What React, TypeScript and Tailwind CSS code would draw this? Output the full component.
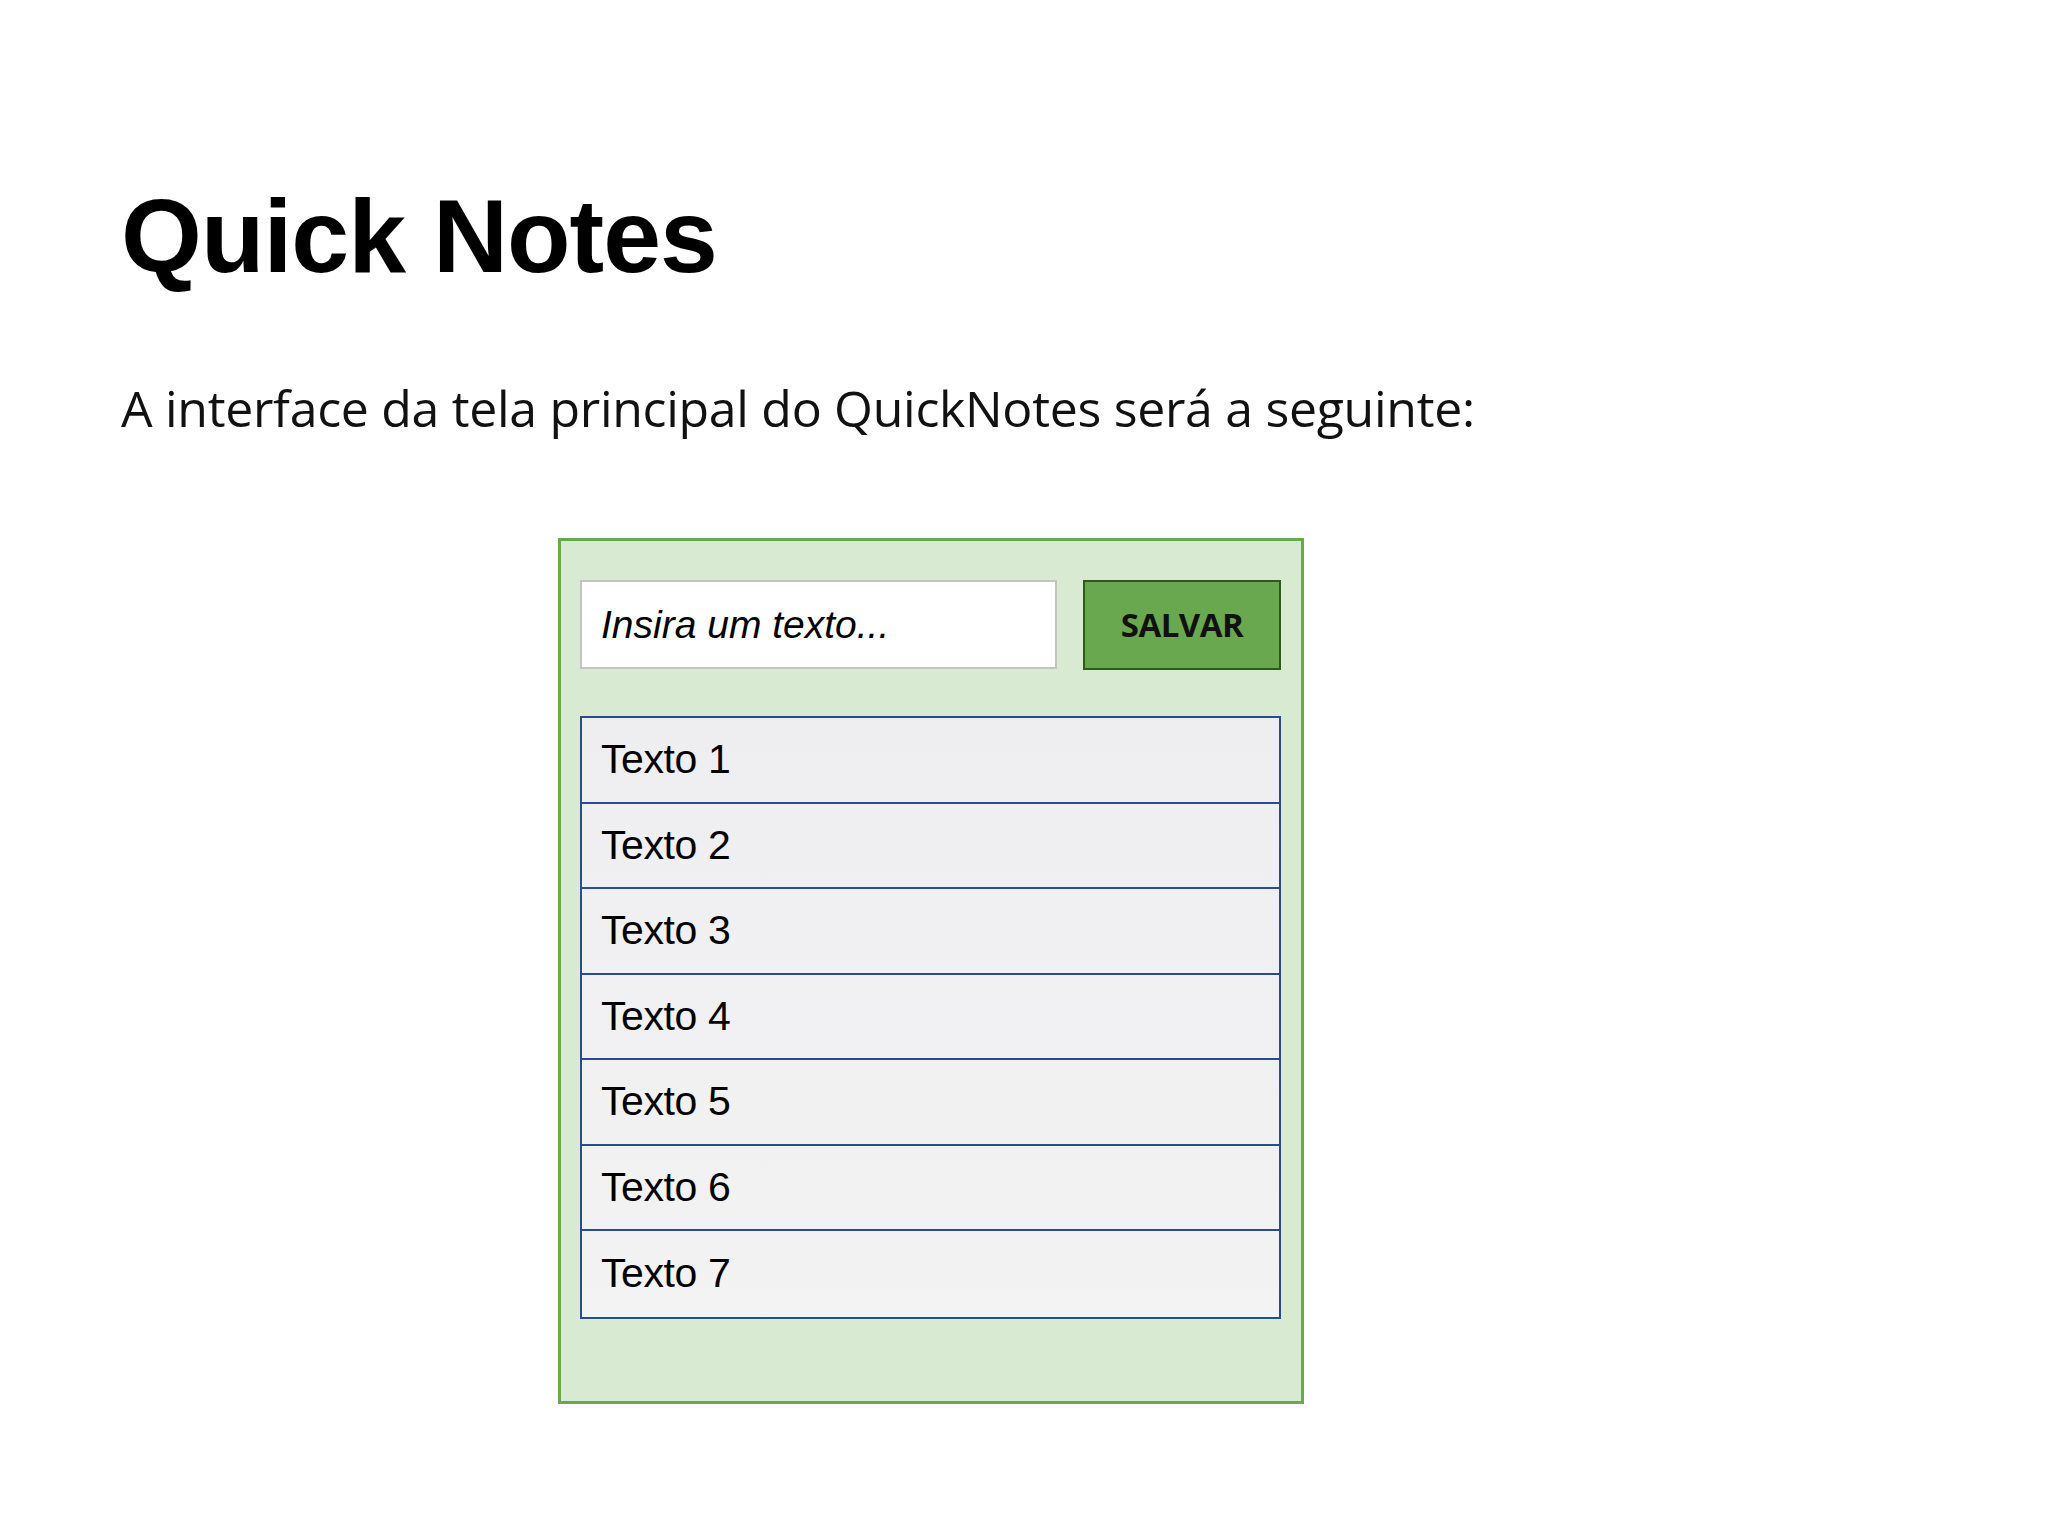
const notes = ["Texto 1", "Texto 2", "Texto 3", "Texto 4", "Texto 5", "Texto 6", "Texto 7"];

export default function App() {
  return (
    <main className="min-h-screen w-full bg-white pl-[121px] pt-[184px]">
      <h1 className="font-['Liberation_Sans',Arial,sans-serif] text-[104px] font-bold leading-none tracking-[-1px] text-black">
        Quick Notes
      </h1>
      <p className="mt-[95px] font-['Open_Sans',sans-serif] text-[50px] leading-none tracking-[-0.3px] text-[#111]">
        A interface da tela principal do QuickNotes será a seguinte:
      </p>

      <div className="mt-[105px] ml-[437px] flex h-[866px] w-[746px] flex-col border-[3px] border-[#6aa84f] bg-[#d9ead3] pl-[19px] pr-[20px] pt-[39px]">
        <div className="flex gap-[26px]">
          <input
            className="h-[89px] w-[477px] border-2 border-[#c3c3c3] bg-white px-[19px] font-['Liberation_Sans',Arial,sans-serif] text-[39px] italic text-black outline-none placeholder:text-black"
            placeholder="Insira um texto..."
          />
          <button className="h-[90px] w-[198px] border-2 border-[#2d5a1b] bg-[#6aa84f] font-['Open_Sans',sans-serif] text-[33px] font-bold tracking-[-0.5px] text-[#111]">
            SALVAR
          </button>
        </div>

        <ul className="mt-[46px] w-[701px] divide-y-2 divide-[#2b4c8c] border-2 border-[#2b4c8c] bg-linear-to-b from-[#eeedf0] to-[#f4f3f3]">
          {notes.map((n) => (
            <li
              key={n}
              className="flex h-[85.5px] items-center pl-[19px] font-['Liberation_Sans',Arial,sans-serif] text-[41px] tracking-[-0.4px] text-black"
            >
              {n}
            </li>
          ))}
        </ul>
      </div>
    </main>
  );
}
